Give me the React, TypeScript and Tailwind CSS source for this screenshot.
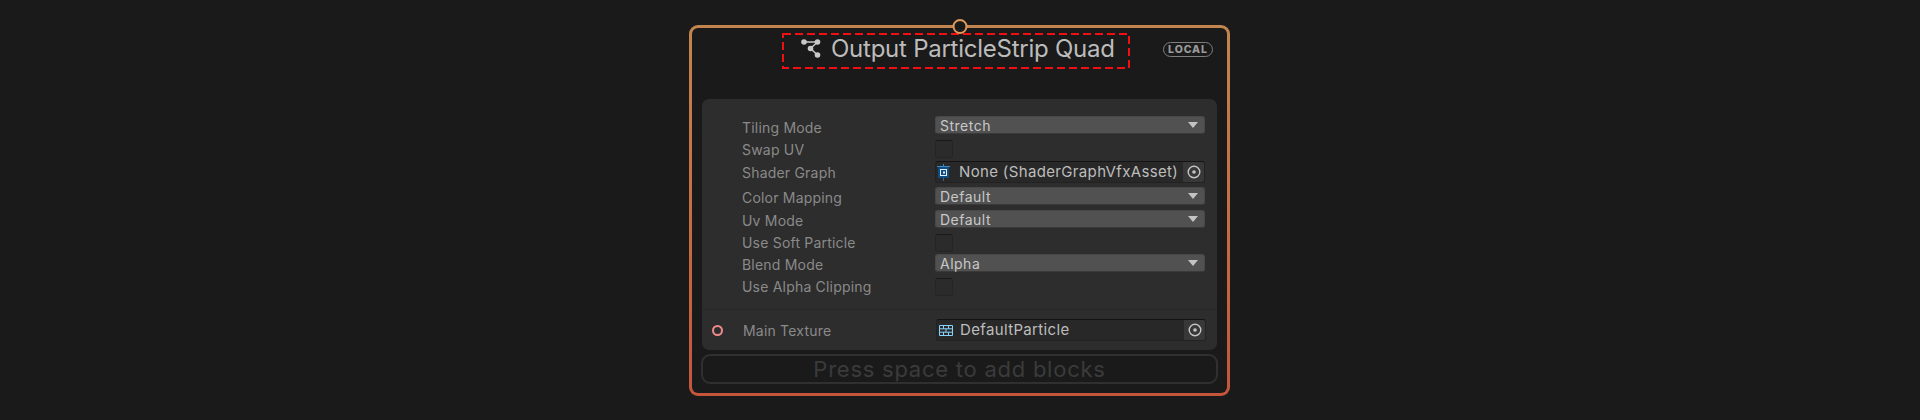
import { ReactNode } from "react";

const Caret = () => (
  <svg width="10" height="6" viewBox="0 0 10 6" className="ml-auto mr-[6px] -mt-[1px]">
    <path d="M0 0H10L5 6Z" fill="#c4c4c4" />
  </svg>
);

const Target = () => (
  <div className="ml-auto flex h-full w-[21px] items-center justify-center bg-[#383838]">
    <svg width="14" height="14" viewBox="0 0 14 14">
      <circle cx="7" cy="7" r="5.8" fill="none" stroke="#c4c4c4" strokeWidth="1.4" />
      <circle cx="7" cy="7" r="1.8" fill="#c4c4c4" />
    </svg>
  </div>
);

const GraphIcon = () => (
  <svg width="20" height="20" viewBox="0 0 20 20" className="mr-[10px] shrink-0">
    <path d="M3 3H16.5L9.5 9.5L16.5 16" fill="none" stroke="#c8c8c8" strokeWidth="1.5" />
    <circle cx="3" cy="3" r="2.8" fill="#c8c8c8" />
    <circle cx="16.5" cy="3" r="2.8" fill="#c8c8c8" />
    <circle cx="9.5" cy="9.5" r="2.8" fill="#c8c8c8" />
    <circle cx="16.5" cy="16" r="2.8" fill="#c8c8c8" />
  </svg>
);

const ShaderIcon = () => (
  <svg width="13" height="17" viewBox="0 0 13 17" className="mr-[9px] shrink-0">
    <rect x="1" y="3" width="11" height="11" fill="#0f4c81" />
    <rect x="0" y="2" width="13" height="1" fill="#3f88c5" />
    <rect x="6" y="0" width="1" height="2" fill="#3f88c5" />
    <rect x="6" y="14" width="1" height="3" fill="#2f6a9c" />
    <rect x="3.5" y="5.5" width="6" height="6" fill="none" stroke="#e6eef5" />
    <rect x="6" y="7.5" width="2" height="2" fill="#e6eef5" />
  </svg>
);

const TextureIcon = () => (
  <svg width="14" height="11" viewBox="0 0 14 11" className="ml-[1px] mr-[7px] shrink-0">
    <path
      d="M.5.5H13.5V10.5H.5ZM.5 3.8H13.5M.5 7.2H13.5M4.5.5V3.8M9.5.5V3.8M7 3.8V7.2M4.5 7.2V10.5M9.5 7.2V10.5"
      fill="none"
      stroke="#86d4ff"
    />
  </svg>
);

const Label = ({ children, className = "" }: { children: ReactNode; className?: string }) => (
  <span className={`w-[193px] shrink-0 text-[14px] tracking-[0.2px] text-[#8a8a8a] ${className}`}>{children}</span>
);

const Dropdown = ({ label, value, className, labelClass = "pt-[2px]" }: { label: string; value: string; className: string; labelClass?: string }) => (
  <div className={`flex h-[18px] items-center ${className}`}>
    <Label className={labelClass}>{label}</Label>
    <div className="flex h-[18px] w-[270px] items-center rounded-[3px] border border-[#484848] border-b-[#3a3a3a] bg-[#515151] pl-[4px] text-[14px] tracking-[0.5px] text-[#c8c8c8]">
      {value}
      <Caret />
    </div>
  </div>
);

const Check = ({ label, className, labelClass = "" }: { label: string; className: string; labelClass?: string }) => (
  <div className={`flex h-[18px] items-center ${className}`}>
    <Label className={labelClass}>{label}</Label>
    <div className="h-[18px] w-[18px] rounded-[3px] border border-[#252525] border-t-[#191919] bg-[#2b2b2b]" />
  </div>
);

const ObjectField = ({ icon, value }: { icon: ReactNode; value: string }) => (
  <div className="flex h-[22px] w-[270px] items-center overflow-hidden rounded-[3px] border border-[#222222] border-t-[#141414] bg-[#282828] pl-[1px] text-[15px] tracking-[0.35px] text-[#bdbdbd]">
    {icon}
    <span className="whitespace-nowrap">{value}</span>
    <Target />
  </div>
);

export default function App() {
  return (
    <div className="flex h-[420px] w-[1920px] justify-center overflow-hidden bg-[#1a1a1a] pt-[25px] pr-[1px] font-['Inter',sans-serif]">
      <div className="relative h-[371px] w-[541px] rounded-[9px] bg-gradient-to-b from-[#c2854f] to-[#c4553a] p-[3px]">
        <div className="absolute left-1/2 top-[-6px] z-10 h-[15px] w-[15px] -translate-x-1/2 rounded-full border-2 border-[#e0995c] bg-[#1a1a1a]" />
        <div className="h-full w-full rounded-[6px] bg-[#1a1a1a] px-[9px]">
          <div className="relative flex h-[71px] items-start justify-center">
            <div className="relative mr-[7px] mt-[5px] flex h-[36px] w-[348px] items-center pb-[4px] pl-[19px] text-[24px] tracking-[-0.25px] text-[#bcbcbc]">
              <svg width="348" height="36" viewBox="0 0 348 36" className="absolute left-0 top-0">
                <rect x="1" y="1" width="346" height="34" fill="none" stroke="#f00f13" strokeWidth="2" strokeDasharray="8 4" />
              </svg>
              <GraphIcon />
              <span className="whitespace-nowrap">Output ParticleStrip Quad</span>
            </div>
            <div className="absolute right-[5px] top-[14px] flex h-[15px] w-[50px] items-center justify-center rounded-full border-[1.5px] border-[#7e7e7e] text-[10.5px] font-extrabold tracking-[0.9px] text-[#9a9a9a]">
              LOCAL
            </div>
          </div>
          <div className="mx-[1px] h-[251px] rounded-[7px] bg-[#2d2d2d] pl-[40px] pt-[17px]">
            <Dropdown label="Tiling Mode" value="Stretch" className="" labelClass="pt-[4px]" />
            <Check label="Swap UV" className="mt-[6px]" />
            <div className="mt-[3px] flex h-[22px] items-center">
              <Label>Shader Graph</Label>
              <ObjectField icon={<ShaderIcon />} value="None (ShaderGraphVfxAsset)" />
            </div>
            <Dropdown label="Color Mapping" value="Default" className="mt-[4px]" />
            <Dropdown label="Uv Mode" value="Default" className="mt-[5px]" />
            <Check label="Use Soft Particle" className="mt-[6px]" labelClass="pb-[1px]" />
            <Dropdown label="Blend Mode" value="Alpha" className="mt-[2px]" />
            <Check label="Use Alpha Clipping" className="mt-[6px]" labelClass="pb-[1px]" />
            <div className="-ml-[40px] mt-[13px] h-[1px] bg-[#272727]" />
            <div className="-ml-[40px] mt-[9px] flex h-[22px] items-center">
              <div className="ml-[10px] mr-[20px] h-[11px] w-[11px] rounded-full border-2 border-[#f08a8a]" />
              <Label className="w-[192px]">Main Texture</Label>
              <ObjectField icon={<TextureIcon />} value="DefaultParticle" />
            </div>
          </div>
          <div className="mt-[4px] flex h-[30px] items-center justify-center rounded-[9px] border-2 border-[#303030] text-[22px] tracking-[0.75px] text-[#3b3b3b]">
            Press space to add blocks
          </div>
        </div>
      </div>
    </div>
  );
}
